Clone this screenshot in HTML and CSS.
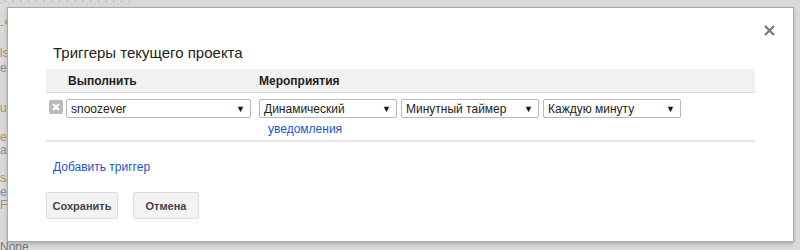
FILE: index.html
```html
<!DOCTYPE html>
<html>
<head>
<meta charset="utf-8">
<link rel="stylesheet" href="styles.css">
</head>
<body>
<div class="backdrop">
  <div class="bg-top">-*-*-*-*-*-*-*-*-*-*-*-*-*-*-*-*-*</div>
  <div class="bg-lines">
    <div class="o">-*</div>
    <div class="o">ls</div>
    <div class="b">ep</div>
    <div class="o">ur</div>
    <div class="o">e</div>
    <div class="b">ad</div>
    <div class="o">sa</div>
    <div class="b">er</div>
    <div class="o">Fr</div>
    <div class="g">None</div>
  </div>
</div>

<div class="dialog">
  <button class="close" aria-label="Закрыть">
    <svg width="11" height="11" viewBox="0 0 11 11"><path d="M1 1L10 10M10 1L1 10" stroke="#777" stroke-width="2.2"/></svg>
  </button>
  <h2 class="title">Триггеры текущего проекта</h2>
  <div class="table">
    <div class="thead">
      <div class="col-run">Выполнить</div>
      <div class="col-event">Мероприятия</div>
    </div>
    <div class="row">
      <div class="del">
        <svg width="14" height="14" viewBox="0 0 14 14"><rect width="14" height="14" rx="2" fill="#bababa"/><path d="M4 4L10 10M10 4L4 10" stroke="#fff" stroke-width="2"/></svg>
      </div>
      <div class="sel w1"><span>snoozever</span><i>▼</i></div>
      <div class="events">
        <div class="sels">
          <div class="sel w2"><span>Динамический</span><i>▼</i></div>
          <div class="sel w2"><span>Минутный таймер</span><i>▼</i></div>
          <div class="sel w2"><span>Каждую минуту</span><i>▼</i></div>
        </div>
        <a class="link notif" href="#">уведомления</a>
      </div>
    </div>
  </div>
  <a class="link add" href="#">Добавить триггер</a>
  <div class="buttons">
    <button class="btn save">Сохранить</button>
    <button class="btn cancel">Отмена</button>
  </div>
</div>
</body>
</html>
```

FILE: styles.css
```css
* { box-sizing: border-box; }
html, body { margin: 0; padding: 0; }
body {
  width: 800px;
  height: 250px;
  overflow: hidden;
  background: #dadada;
  font-family: "Liberation Sans", Arial, sans-serif;
  position: relative;
}
.backdrop {
  height: 250px;
  font-size: 12px;
  overflow: hidden;
}
.bg-top {
  width: 176px;
  height: 7px;
  line-height: 5px;
  font-size: 8px;
  letter-spacing: 1px;
  color: #d6b48e;
  overflow: hidden;
  white-space: nowrap;
}
.bg-lines {
  line-height: 12px;
  width: 60px;
}
.bg-lines .o { color: #b08a68; }
.bg-lines .b { color: #7d8cab; }
.bg-lines .g { color: #777; }
.bg-lines div:nth-child(1) { margin-top: 12px; }
.bg-lines div:nth-child(2) { margin-top: 16px; }
.bg-lines div:nth-child(3) { margin-top: 3px; }
.bg-lines div:nth-child(4) { margin-top: 28px; }
.bg-lines div:nth-child(5) { margin-top: 17px; }
.bg-lines div:nth-child(6) { margin-top: 1px; }
.bg-lines div:nth-child(7) { margin-top: 16px; }
.bg-lines div:nth-child(8) { margin-top: 2px; }
.bg-lines div:nth-child(9) { margin-top: 1px; }
.bg-lines div:nth-child(10) { margin-top: 30px; }

.dialog {
  position: absolute;
  left: 7px;
  top: 7px;
  width: 787px;
  height: 235px;
  background: #fff;
  border: 1px solid #aaa;
  box-shadow: 0 2px 4px rgba(0,0,0,0.2);
  padding: 0 38px;
}
.close {
  position: absolute;
  right: 18px;
  top: 17px;
  border: 0;
  background: none;
  padding: 0;
  width: 11px;
  height: 11px;
  cursor: pointer;
}
.close svg { display: block; }
.title {
  margin: 36px 0 0 7px;
  font-size: 15px;
  font-weight: normal;
  color: #222;
  line-height: 18px;
}
.table {
  margin-top: 7px;
  width: 709px;
}
.thead {
  display: flex;
  height: 24px;
  background: #f1f1f1;
  border-bottom: 1px solid #dcdcdc;
  align-items: center;
  font-size: 12px;
  font-weight: bold;
  color: #222;
}
.col-run { width: 213px; padding-left: 22px; }
.row {
  display: flex;
  align-items: flex-start;
  padding: 6px 0 4px 3px;
  border-bottom: 2px solid #e5e5e5;
}
.del { width: 17px; padding-top: 1px; }
.del svg { display: block; }
.sel {
  height: 19px;
  border: 1px solid #b8b8b8;
  border-radius: 2px;
  display: flex;
  align-items: center;
  justify-content: space-between;
  padding: 0 5px 0 4px;
  font-size: 12px;
  color: #222;
  background: #fff;
}
.sel i {
  font-style: normal;
  font-size: 9px;
  color: #111;
}
.w1 { width: 185px; margin-right: 8px; }
.w2 { width: 138px; }
.events { display: flex; flex-direction: column; }
.sels { display: flex; gap: 4px; }
.link {
  color: #1a55cc;
  text-decoration: none;
  font-size: 12px;
}
.notif { margin: 4px 0 0 9px; line-height: 14px; }
.add { display: block; margin: 18px 0 0 7px; line-height: 14px; }
.buttons {
  display: flex;
  gap: 15px;
  margin-top: 18px;
}
.btn {
  height: 27px;
  border: 1px solid #dcdcdc;
  border-radius: 2px;
  background: #f3f3f3;
  font-family: "Liberation Sans", Arial, sans-serif;
  font-size: 11px;
  font-weight: bold;
  color: #444;
  padding: 0;
}
.save { width: 72px; }
.cancel { width: 66px; }
```
